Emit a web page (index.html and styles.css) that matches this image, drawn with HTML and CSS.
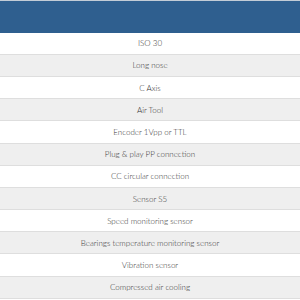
FILE: index.html
```html
<!DOCTYPE html>
<html>
<head>
<meta charset="utf-8">
<link rel="stylesheet" href="styles.css">
</head>
<body>
<table class="spec">
  <thead>
    <tr><th></th></tr>
  </thead>
  <tbody>
    <tr><td>ISO 30</td></tr>
    <tr><td>Long nose</td></tr>
    <tr><td>C Axis</td></tr>
    <tr><td>Air Tool</td></tr>
    <tr><td>Encoder 1Vpp or TTL</td></tr>
    <tr><td>Plug &amp; play PP connection</td></tr>
    <tr><td>CC circular connection</td></tr>
    <tr><td>Sensor S5</td></tr>
    <tr><td>Speed monitoring sensor</td></tr>
    <tr><td>Bearings temperature monitoring sensor</td></tr>
    <tr><td>Vibration sensor</td></tr>
    <tr><td>Compressed air cooling</td></tr>
  </tbody>
</table>
</body>
</html>
```
FILE: styles.css
```css
html, body {
  margin: 0;
  padding: 0;
  background: #ffffff;
}
.spec {
  width: 100%;
  border-collapse: collapse;
  font-family: Lato, "Open Sans", sans-serif;
  font-size: 8px;
  font-weight: 300;
  color: #333333;
}
.spec th {
  height: 31.6px;
  padding: 0;
  background: #2f5f8f;
  border-top: 1px solid #c3ccd6;
}
.spec td {
  height: 21.2px;
  padding: 0;
  text-align: center;
  border-bottom: 1px solid #dedede;
}
.spec tbody tr:nth-child(even) td {
  background: #efefef;
}
```
